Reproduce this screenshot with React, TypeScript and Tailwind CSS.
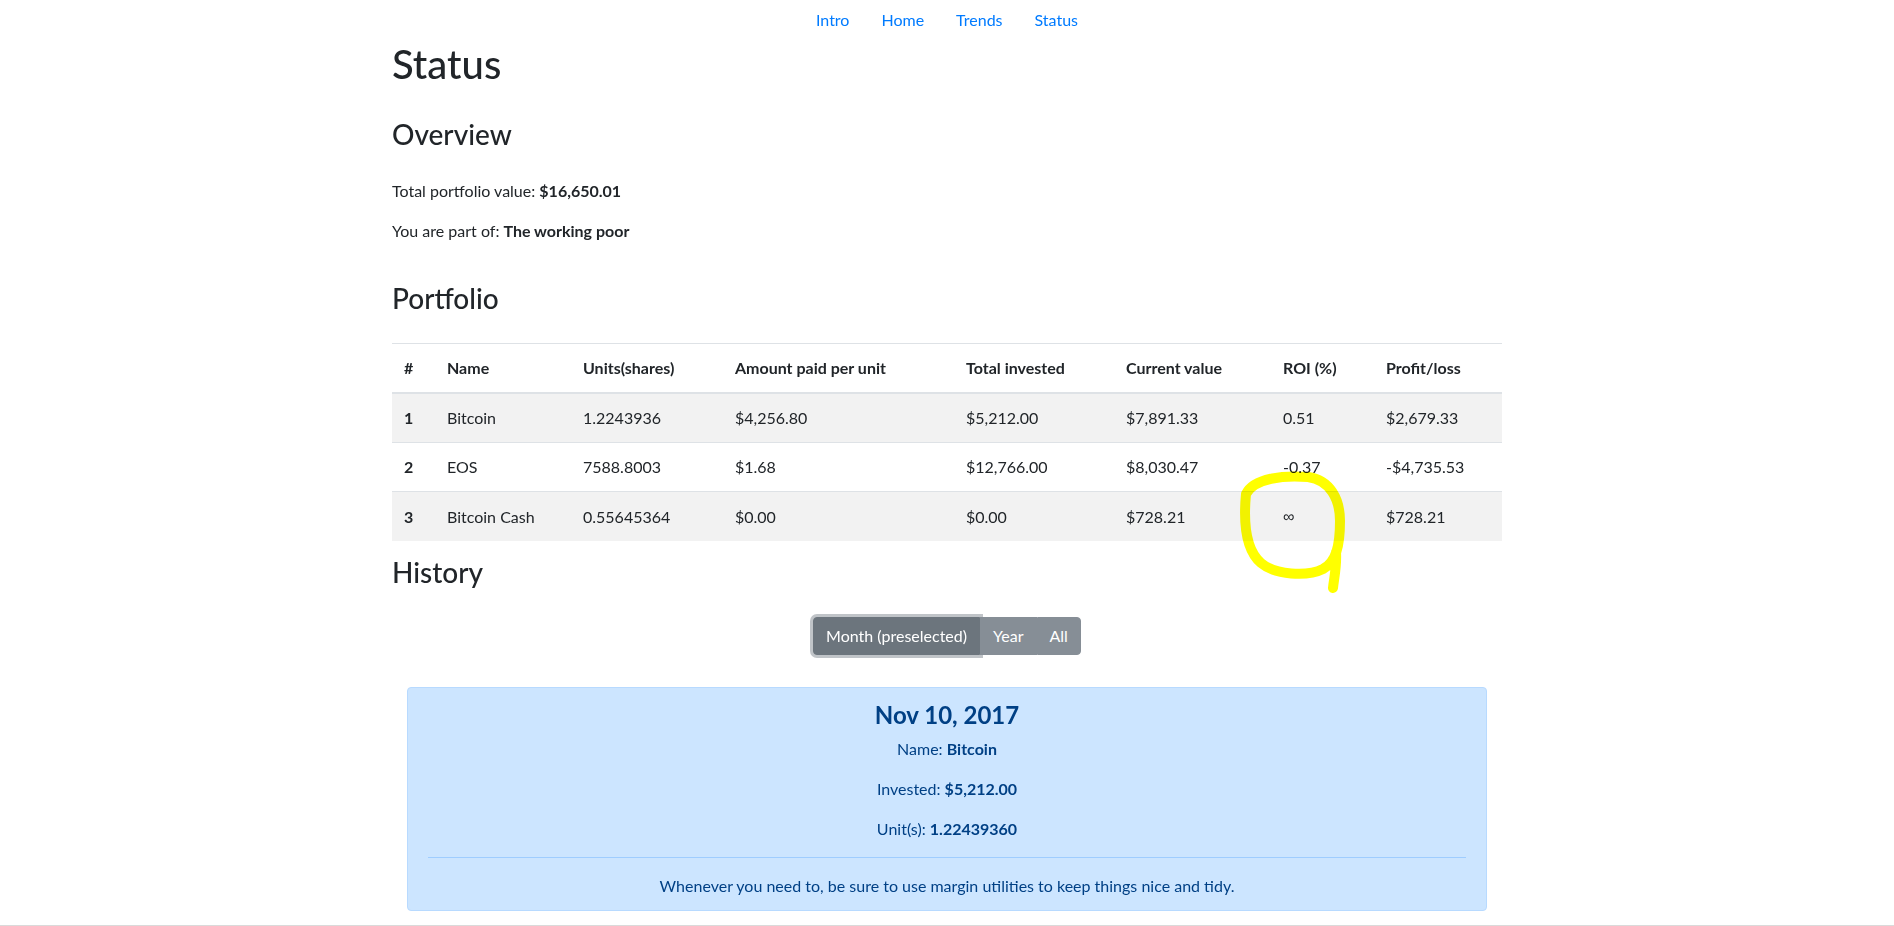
import React from "react";

const rows = [
  ["1", "Bitcoin", "1.2243936", "$4,256.80", "$5,212.00", "$7,891.33", "0.51", "$2,679.33"],
  ["2", "EOS", "7588.8003", "$1.68", "$12,766.00", "$8,030.47", "-0.37", "-$4,735.53"],
  ["3", "Bitcoin Cash", "0.55645364", "$0.00", "$0.00", "$728.21", "∞", "$728.21"],
];

const headers = ["#", "Name", "Units(shares)", "Amount paid per unit", "Total invested", "Current value", "ROI (%)", "Profit/loss"];
const widths = [43, 136, 152, 231, 160, 157, 103, 128];

export default function App() {
  return (
    <div className="relative min-h-[926px] bg-white text-[#212529] font-['Lato','Liberation_Sans',sans-serif] text-base leading-6">
      <nav className="flex justify-center">
        {["Intro", "Home", "Trends", "Status"].map((l) => (
          <a key={l} href="#" className="block px-4 py-2 text-[#007bff]">
            {l}
          </a>
        ))}
      </nav>
      <div className="mx-auto flex w-[1110px] flex-col">
        <h1 className="mb-2 text-[40px] leading-[48px] font-medium">Status</h1>
        <h3 className="mt-[21px] mb-2 text-[28px] leading-[34px] font-medium">Overview</h3>
        <p className="mt-5 mb-4">
          Total portfolio value: <b className="font-bold">$16,650.01</b>
        </p>
        <p className="mb-4">
          You are part of: <b className="font-bold">The working poor</b>
        </p>
        <h3 className="mt-[22px] mb-2 text-[28px] leading-[34px] font-medium">Portfolio</h3>
        <table className="mt-5 mb-[14px] w-full table-fixed border-collapse">
          <colgroup>
            {widths.map((w, i) => (
              <col key={i} style={{ width: w }} />
            ))}
          </colgroup>
          <thead>
            <tr>
              {headers.map((h) => (
                <th key={h} className="border-t border-b-2 border-[#dee2e6] p-3 text-left font-bold align-bottom">
                  {h}
                </th>
              ))}
            </tr>
          </thead>
          <tbody>
            {rows.map((r, i) => (
              <tr key={i} className={i % 2 === 0 ? "bg-[#f2f2f2]" : "bg-white"}>
                {r.map((c, j) =>
                  j === 0 ? (
                    <th key={j} className="border-t border-[#dee2e6] p-3 text-left font-bold">
                      {c}
                    </th>
                  ) : (
                    <td key={j} className="border-t border-[#dee2e6] p-3">
                      {c === "∞" ? <span className="font-['Liberation_Sans',sans-serif]">∞</span> : c}
                    </td>
                  )
                )}
              </tr>
            ))}
          </tbody>
        </table>
        <h3 className="mb-2 text-[28px] leading-[34px] font-medium">History</h3>
        <div className="mt-5 flex justify-center">
          <div className="flex">
            <button className="rounded-l-[4px] border border-[#6c757d] bg-[#6c757d] px-3 py-[6px] text-white shadow-[0_0_0_3px_rgba(130,138,145,0.5)]">
              Month (preselected)
            </button>
            <button className="relative z-10 border border-[#868e96] bg-[#868e96] px-3 py-[6px] text-white">Year</button>
            <button className="relative z-10 rounded-r-[4px] border border-[#868e96] bg-[#868e96] px-3 py-[6px] text-white">All</button>
          </div>
        </div>
        <div className="mx-[15px] mt-8 rounded-[4px] border border-[#b8daff] bg-[#cce5ff] px-5 py-3 text-center text-[#004085]">
          <h4 className="mb-2 text-2xl leading-[29px] font-bold">Nov 10, 2017</h4>
          <p className="mb-4">
            Name: <b className="font-bold">Bitcoin</b>
          </p>
          <p className="mb-4">
            Invested: <b className="font-bold">$5,212.00</b>
          </p>
          <p>
            Unit(s): <b className="font-bold">1.22439360</b>
          </p>
          <hr className="my-4 border-0 border-t border-[#9fcdff]" />
          <p>Whenever you need to, be sure to use margin utilities to keep things nice and tidy.</p>
        </div>
      </div>
      <div className="mt-[14px] h-[2px] bg-[#dadada]" />
      <svg
        className="pointer-events-none absolute left-[1232px] top-[466px] mix-blend-multiply"
        width="120"
        height="132"
        viewBox="0 0 120 132"
        fill="none"
      >
        <path
          d="M14 28 C22 12 52 9 76 11 C98 14 108 33 108 55 C108 80 104 96 91 103 C75 111 43 109 29 97 C15 85 11 60 14 28 M104 86 C105 100 102 112 101 122"
          stroke="#ffff00"
          strokeWidth="10"
          strokeLinecap="round"
          strokeLinejoin="round"
        />
      </svg>
    </div>
  );
}
